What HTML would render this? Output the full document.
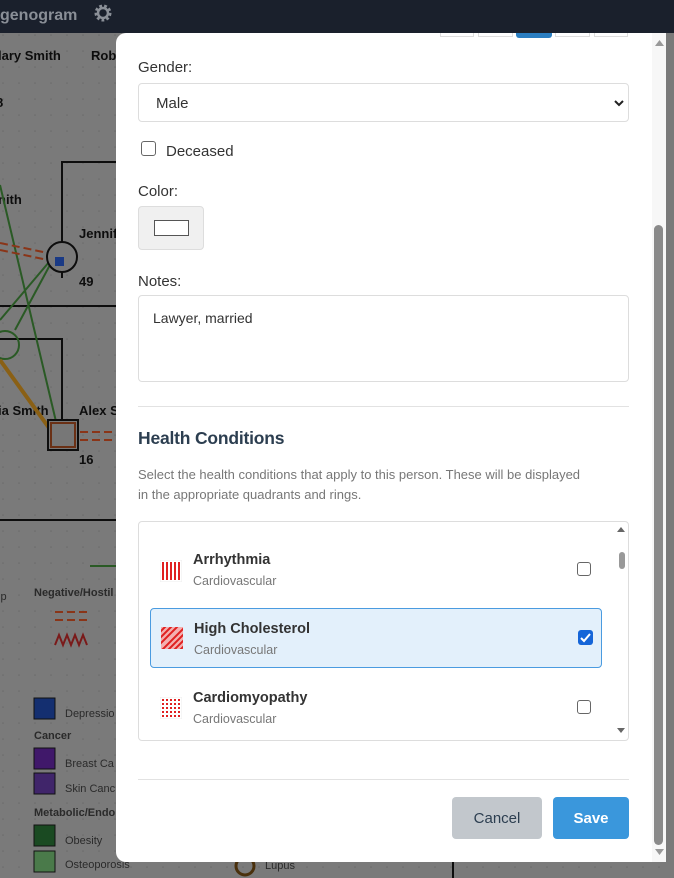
<!DOCTYPE html>
<html><head><meta charset="utf-8"><style>
*{box-sizing:border-box;margin:0;padding:0}
body{width:674px;height:878px;overflow:hidden;font-family:"Liberation Sans",sans-serif;background:#7a7a7a;position:relative}
.hdr{position:absolute;left:0;top:0;width:674px;height:33px;background:#1a202c;color:#8a8f97;font-weight:bold;font-size:16px}
.bg{position:absolute;left:0;top:33px}
.modal{position:absolute;left:116px;top:33px;width:550px;height:829px;background:#fff;border-radius:10px 0 0 10px;overflow:hidden;color:#333}
.abs{position:absolute}
.lbl{font-size:15px;color:#333}
.box{border:1px solid #ddd;border-radius:4px;background:#fff}
.btn{position:absolute;top:764px;height:42px;border-radius:4px;font-size:15px;font-weight:bold;text-align:center;line-height:44px}
.sb{position:absolute;left:536px;top:0;width:14px;height:829px;background:#f7f7f7}
.item .t{position:absolute;left:43px;font-size:14.5px;color:#333;font-weight:bold}
.item .s{position:absolute;left:43px;font-size:12.5px;color:#777}
.cb{position:absolute;width:14px;height:14px;border:1.5px solid #666;border-radius:3px;background:#fff}
</style></head><body>
<div class="hdr"><span style="position:absolute;left:0;top:7px">genogram</span>
<svg class="abs" style="left:93px;top:3px" width="20" height="20" viewBox="0 0 20 20"><circle cx="10" cy="10" r="6.5" fill="none" stroke="#8a8f97" stroke-width="4" stroke-dasharray="2.5 2"/><circle cx="10" cy="10" r="5" fill="none" stroke="#8a8f97" stroke-width="2.5"/></svg></div>
<svg class="bg" width="674" height="845" viewBox="0 33 674 845">
<defs><pattern id="d" width="16" height="16" patternUnits="userSpaceOnUse"><circle cx="3" cy="3" r="0.8" fill="#6a6a6a"/></pattern></defs>
<rect x="0" y="33" width="674" height="845" fill="url(#d)"/>
<g font-weight="bold" font-size="13" fill="#0d0d0d">
<text x="-2" y="60">lary Smith</text><text x="91" y="60">Rob</text><text x="-4" y="107">8</text>
<text x="-2" y="204">nith</text><text x="79" y="238">Jennif</text><text x="79" y="286">49</text>
<text x="-2" y="415">ia Smith</text><text x="79" y="415">Alex S</text><text x="79" y="464">16</text></g>
<g fill="none" stroke="#0d0d0d" stroke-width="2"><path d="M62 278V162H120M0 306H120M0 339H62V420M0 520H120"/></g>
<g stroke="#2a5a25" stroke-width="2" fill="none"><path d="M0 185L58 430M0 320L55 255M15 330L58 250"/><circle cx="5" cy="345" r="14"/><path d="M120 566H90" /></g>
<path d="M0 360L52 432" stroke="#8a6015" stroke-width="4"/>
<g stroke="#8a3518" stroke-width="2" stroke-dasharray="8 4"><path d="M0 243L48 253M0 250L48 260M80 432H116M80 440H116M55 612H90M55 620H90"/></g>
<circle cx="62" cy="257" r="15" fill="#7a7a7a" stroke="#0d0d0d" stroke-width="2"/><rect x="55" y="257" width="9" height="9" fill="#1a3a85"/>
<rect x="48" y="420" width="30" height="30" fill="#777" stroke="#0d0d0d" stroke-width="2"/><rect x="51" y="423" width="24" height="24" fill="none" stroke="#6a3015" stroke-width="2"/>
<path d="M55 645l4-10 4 10 4-10 4 10 4-10 4 10 4-10 4 10" stroke="#7a1a1a" stroke-width="2" fill="none"/>
<g font-size="11" fill="#2a2a2a"><text x="34" y="596" font-weight="bold">Negative/Hostil</text><text x="-2" y="600">ip</text>
<text x="65" y="717">Depressio</text><text x="34" y="739" font-weight="bold">Cancer</text><text x="65" y="767">Breast Ca</text><text x="65" y="792">Skin Canc</text>
<text x="34" y="816" font-weight="bold">Metabolic/Endo</text><text x="65" y="844">Obesity</text><text x="65" y="868">Osteoporosis</text><text x="265" y="869">Lupus</text></g>
<rect x="34" y="698" width="21" height="21" fill="#142f70" stroke="#111"/>
<rect x="34" y="748" width="21" height="21" fill="#40186a" stroke="#111"/>
<rect x="34" y="773" width="21" height="21" fill="#40256a" stroke="#111"/>
<rect x="34" y="825" width="21" height="21" fill="#1a4a22" stroke="#111"/>
<rect x="34" y="851" width="21" height="21" fill="#4a7a4a" stroke="#111"/>
<circle cx="245" cy="866" r="9" fill="none" stroke="#4a300c" stroke-width="3"/>
<path d="M453 862V878" stroke="#0d0d0d" stroke-width="2"/>
</svg>
<div class="modal">
<div class="abs" style="left:324px;top:0;width:34px;height:4px;border:1px solid #ddd;border-top:0"></div>
<div class="abs" style="left:362px;top:0;width:35px;height:4px;border:1px solid #ddd;border-top:0"></div>
<div class="abs" style="left:400px;top:0;width:36px;height:5px;background:#2b7ec1;border-radius:0 0 3px 3px"></div>
<div class="abs" style="left:439px;top:0;width:35px;height:4px;border:1px solid #ddd;border-top:0"></div>
<div class="abs" style="left:478px;top:0;width:34px;height:4px;border:1px solid #ddd;border-top:0"></div>
<div class="abs lbl" style="left:22px;top:26px">Gender:</div>
<div class="abs box" style="left:22px;top:50px;width:491px;height:39px;font-size:15px;padding:11px 17px">Male<svg class="abs" style="right:4px;top:15px" width="10" height="8"><path d="M1 2l4 4 4-4" stroke="#222" stroke-width="2" fill="none"/></svg></div>
<div class="cb" style="left:25px;top:108px;width:15px;height:15px"></div>
<div class="abs lbl" style="left:50px;top:110px">Deceased</div>
<div class="abs lbl" style="left:22px;top:150px">Color:</div>
<div class="abs" style="left:22px;top:173px;width:66px;height:44px;background:#f0f0f0;border:1px solid #ddd;border-radius:4px"><div class="abs" style="left:15px;top:13px;width:35px;height:16px;background:#fff;border:1px solid #555"></div></div>
<div class="abs lbl" style="left:22px;top:240px">Notes:</div>
<div class="abs box" style="left:22px;top:262px;width:491px;height:87px;font-size:14px;padding:14px 14px">Lawyer, married</div>
<div class="abs" style="left:22px;top:373px;width:491px;height:1px;background:#e2e2e2"></div>
<div class="abs" style="left:22px;top:395px;font-size:17.5px;color:#2c3e50;font-weight:bold;letter-spacing:-0.2px">Health Conditions</div>
<div class="abs" style="left:22px;top:432px;width:500px;font-size:13px;line-height:20px;color:#777;white-space:nowrap">Select the health conditions that apply to this person. These will be displayed<br>in the appropriate quadrants and rings.</div>
<div class="abs box" style="left:22px;top:488px;width:491px;height:220px;overflow:hidden">
 <svg class="abs" style="right:3px;top:5px" width="8" height="6"><path d="M0 5L4 0L8 5Z" fill="#666"/></svg>
 <div class="abs" style="right:3px;top:30px;width:6px;height:17px;background:#999;border-radius:3px"></div>
 <svg class="abs" style="right:3px;top:206px" width="8" height="6"><path d="M0 0L4 5L8 0Z" fill="#666"/></svg>
 <div class="item abs" style="left:11px;top:20px;width:452px;height:55px">
  <svg class="abs" style="left:10px;top:18px" width="22" height="22"><rect width="22" height="22" fill="#fff" stroke="#eee"/><g stroke="#e02020" stroke-width="2"><path d="M3 2v18M7 2v18M11 2v18M15 2v18M19 2v18"/></g></svg>
  <div class="t" style="top:10px">Arrhythmia</div><div class="s" style="top:32px">Cardiovascular</div>
  <div class="cb" style="left:427px;top:20px"></div></div>
 <div class="item abs" style="left:11px;top:86px;width:452px;height:60px;background:#e3f0fb;border:1px solid #4a9be0;border-radius:4px">
  <svg class="abs" style="left:10px;top:18px" width="22" height="22"><rect width="22" height="22" fill="#f3b0b0"/><g stroke="#e02020" stroke-width="2"><path d="M-2 6L6 -2M-2 12L12 -2M-2 18L18 -2M0 24L24 0M6 24L24 6M12 24L24 12M18 24L24 18"/></g></svg>
  <div class="t" style="top:12px">High Cholesterol</div><div class="s" style="top:34px">Cardiovascular</div>
  <div class="abs" style="left:427px;top:21px;width:15px;height:15px;background:#1565d8;border-radius:3px"><svg width="15" height="15"><path d="M3 8l3 3 6-7" stroke="#fff" stroke-width="2" fill="none"/></svg></div></div>
 <div class="item abs" style="left:11px;top:157px;width:452px;height:55px">
  <svg class="abs" style="left:10px;top:18px" width="22" height="22"><rect width="22" height="22" fill="#fff" stroke="#eee"/><g fill="#e02020"><rect x="2" y="2" width="2" height="2"/><rect x="6" y="2" width="2" height="2"/><rect x="10" y="2" width="2" height="2"/><rect x="14" y="2" width="2" height="2"/><rect x="18" y="2" width="2" height="2"/><rect x="2" y="6" width="2" height="2"/><rect x="6" y="6" width="2" height="2"/><rect x="10" y="6" width="2" height="2"/><rect x="14" y="6" width="2" height="2"/><rect x="18" y="6" width="2" height="2"/><rect x="2" y="10" width="2" height="2"/><rect x="6" y="10" width="2" height="2"/><rect x="10" y="10" width="2" height="2"/><rect x="14" y="10" width="2" height="2"/><rect x="18" y="10" width="2" height="2"/><rect x="2" y="14" width="2" height="2"/><rect x="6" y="14" width="2" height="2"/><rect x="10" y="14" width="2" height="2"/><rect x="14" y="14" width="2" height="2"/><rect x="18" y="14" width="2" height="2"/><rect x="2" y="18" width="2" height="2"/><rect x="6" y="18" width="2" height="2"/><rect x="10" y="18" width="2" height="2"/><rect x="14" y="18" width="2" height="2"/><rect x="18" y="18" width="2" height="2"/></g></svg>
  <div class="t" style="top:11px">Cardiomyopathy</div><div class="s" style="top:33px">Cardiovascular</div>
  <div class="cb" style="left:427px;top:21px"></div></div>
</div>
<div class="abs" style="left:22px;top:746px;width:491px;height:1px;background:#e2e2e2"></div>
<div class="btn" style="left:336px;width:90px;background:#c2c7cc;color:#2c3e50;font-weight:normal">Cancel</div>
<div class="btn" style="left:437px;width:76px;background:#3a97dc;color:#fff">Save</div>
<div class="sb"><svg class="abs" style="left:3px;top:7px" width="9" height="6"><path d="M0 6L4.5 0L9 6Z" fill="#999"/></svg>
<div class="abs" style="left:2px;top:192px;width:9px;height:620px;background:#8a8a8a;border-radius:5px"></div>
<svg class="abs" style="left:3px;top:816px" width="9" height="6"><path d="M0 0L4.5 6L9 0Z" fill="#999"/></svg></div>
</div>
</body></html>
